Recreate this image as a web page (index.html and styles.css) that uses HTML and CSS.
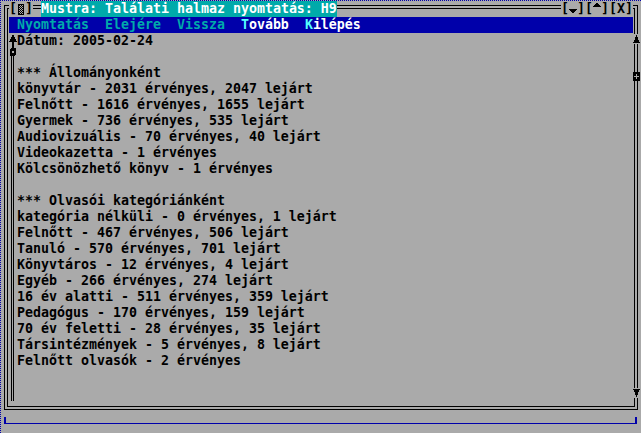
FILE: index.html
```html
<!DOCTYPE html>
<html lang="hu">
<head>
  <meta charset="UTF-8" />
  <title>Mustra - Találati halmaz nyomtatás</title>
  <link rel="stylesheet" href="styles.css">
</head>
<body>
  <div class="screen">
    <div class="titlebar">
      <span class="corner-tl"></span>
      <span class="sysmenu">[<svg width="8" height="16" viewBox="0 0 8 16" shape-rendering="crispEdges">
          <defs>
            <pattern id="chk" width="2" height="2" patternUnits="userSpaceOnUse">
              <rect width="1" height="1" />
              <rect x="1" y="1" width="1" height="1" />
            </pattern>
          </defs>
          <rect x="1" y="3" width="6" height="11" fill="url(#chk)" />
          <rect x="1.5" y="3.5" width="5" height="10" fill="none" stroke="#000" />
        </svg>]</span>
      <span class="hline hline-short"></span>
      <span class="title">Mustra: Találati halmaz nyomtatás: H9</span>
      <span class="hline hline-fill"></span>
      <span class="winbtns">[<svg width="8" height="16" viewBox="0 0 8 16" shape-rendering="crispEdges"><polygon points="0,8 8,8 4,13" /></svg>][<svg width="8" height="16" viewBox="0 0 8 16" shape-rendering="crispEdges"><polygon points="4,1 0,6 8,6" /></svg>][X]</span>
      <span class="corner-tr"></span>
    </div>

    <div class="frame">
      <div class="inner">
        <div class="menubar"> Nyomtatás  Elejére  Vissza  <span class="active"><b>T</b>ovább</span>  <span class="active"><b>K</b>ilépés</span></div>
        <div class="pane">
          <!-- left scrollbar -->
          <svg class="lscroll" width="8" height="368" viewBox="0 0 8 368" shape-rendering="crispEdges">
            <polygon points="4,1 0,9 8,9" />
            <rect x="3" y="9" width="2" height="7" />
            <rect x="1" y="15" width="6" height="8" rx="2" />
            <rect x="3" y="18" width="2" height="2" fill="#aaa" />
            <rect x="2" y="23" width="1" height="345" />
            <rect x="4" y="23" width="1" height="345" />
          </svg>
<pre class="report">Dátum: 2005-02-24

*** Állományonként
könyvtár - 2031 érvényes, 2047 lejárt
Felnőtt - 1616 érvényes, 1655 lejárt
Gyermek - 736 érvényes, 535 lejárt
Audiovizuális - 70 érvényes, 40 lejárt
Videokazetta - 1 érvényes
Kölcsönözhető könyv - 1 érvényes

*** Olvasói kategóriánként
kategória nélküli - 0 érvényes, 1 lejárt
Felnőtt - 467 érvényes, 506 lejárt
Tanuló - 570 érvényes, 701 lejárt
Könyvtáros - 12 érvényes, 4 lejárt
Egyéb - 266 érvényes, 274 lejárt
16 év alatti - 511 érvényes, 359 lejárt
Pedagógus - 170 érvényes, 159 lejárt
70 év feletti - 28 érvényes, 35 lejárt
Társintézmények - 5 érvényes, 8 lejárt
Felnőtt olvasók - 2 érvényes</pre>
        </div>
      </div>

      <!-- right scrollbar, drawn over the frame line -->
      <svg class="rscroll" width="7" height="384" viewBox="0 0 7 384" shape-rendering="crispEdges">
        <rect x="0" y="17" width="7" height="10" fill="#aaa" />
        <polygon points="3.5,18 0,26 7,26" />
        <rect x="0" y="55" width="7" height="9" rx="1" />
        <rect x="3" y="57" width="1" height="5" fill="#aaa" />
        <rect x="1" y="59" width="5" height="1" fill="#aaa" />
        <rect x="0" y="371" width="7" height="10" fill="#aaa" />
        <polygon points="0,372 7,372 3.5,380" />
      </svg>
    </div>

    <div class="statusline"></div>
  </div>
</body>
</html>
```

FILE: styles.css
```css
* {
  margin: 0;
  padding: 0;
  box-sizing: border-box;
}

body {
  background-color: #aaa;
  font-family: "DejaVu Sans Mono", monospace;
  font-size: 13.29px;
  font-weight: bold;
  line-height: 16px;
  color: #000;
}

.screen {
  width: 641px;
  height: 433px;
  border-top: 1px dotted #0000aa;
  border-left: 1px dotted #0000aa;
  display: flex;
  flex-direction: column;
  overflow: hidden;
}

/* title row */
.titlebar {
  display: flex;
  height: 16px;
  white-space: pre;
}

.corner-tl {
  margin-left: 3px;
  margin-top: 4px;
  width: 5px;
  height: 12px;
  border-top: 4px double #000;
  border-left: 4px double #000;
}

.corner-tr {
  margin-right: 3px;
  margin-top: 4px;
  width: 5px;
  height: 12px;
  border-top: 4px double #000;
  border-right: 4px double #000;
}

.sysmenu,
.winbtns {
  display: flex;
}

.sysmenu svg,
.winbtns svg {
  display: block;
}

.hline {
  margin-top: 4px;
  height: 4px;
  border-top: 4px double #000;
}

.hline-short {
  width: 8px;
}

.hline-fill {
  flex: 1;
}

.title {
  background-color: #00aaaa;
  color: #fff;
}

/* window body */
.frame {
  display: flex;
  height: 393px;
  margin: 0 3px;
  padding: 0 1px 5px;
  border: 4px double #000;
  border-top: 0;
}

.inner {
  flex: 1;
  min-width: 0;
  display: flex;
  flex-direction: column;
}

.menubar {
  height: 16px;
  background-color: #0000aa;
  color: #00aaaa;
  white-space: pre;
}

.menubar .active {
  color: #fff;
}

.menubar b {
  color: #55ffff;
}

.pane {
  flex: 1;
  display: flex;
}

.lscroll {
  flex: none;
  display: block;
}

.report {
  font: inherit;
  line-height: 16px;
}

.rscroll {
  flex: none;
  display: block;
  margin-right: -7px;
}

.statusline {
  margin: 7px 4px 0 3px;
  height: 7px;
  border: 2px solid #0000aa;
  border-top: 0;
  border-bottom-width: 1px;
}
```
